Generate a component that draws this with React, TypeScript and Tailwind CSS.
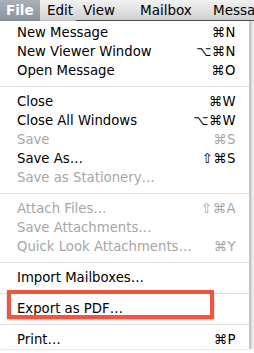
import React from "react";

type Item = { label: string; keys?: string; disabled?: boolean; boxed?: boolean } | "sep";

const items: Item[] = [
  { label: "New Message", keys: "⌘N" },
  { label: "New Viewer Window", keys: "⌥⌘N" },
  { label: "Open Message", keys: "⌘O" },
  "sep",
  { label: "Close", keys: "⌘W" },
  { label: "Close All Windows", keys: "⌥⌘W" },
  { label: "Save", keys: "⌘S", disabled: true },
  { label: "Save As…", keys: "⇧⌘S" },
  { label: "Save as Stationery…", disabled: true },
  "sep",
  { label: "Attach Files…", keys: "⇧⌘A", disabled: true },
  { label: "Save Attachments…", disabled: true },
  { label: "Quick Look Attachments…", keys: "⌘Y", disabled: true },
  "sep",
  { label: "Import Mailboxes…" },
  "sep",
  { label: "Export as PDF…", boxed: true },
  "sep",
  { label: "Print…", keys: "⌘P" },
];

const App = () => {
  return (
    <div className="w-[254px] h-[353px] overflow-hidden bg-white font-['DejaVu_Sans',sans-serif] text-black">
      <div className="flex h-[21px] items-center bg-gradient-to-b from-[#f2f2f2] to-[#cfcfcf] text-[13.5px] whitespace-nowrap">
        <div className="h-full w-[40px] shrink-0 flex items-center pl-[6px] font-bold text-white bg-gradient-to-b from-[#a9b0ba] to-[#8a929e]">
          File
        </div>
        <div className="h-full w-[36px] shrink-0 flex items-center pl-[7px]">Edit</div>
        <div className="h-full w-[57px] shrink-0 flex items-center pl-[7px] border-b border-[#555]">View</div>
        <div className="h-full w-[73px] shrink-0 flex items-center pl-[7px] border-b border-[#555]">Mailbox</div>
        <div className="h-full flex-1 flex items-center pl-[7px] border-b border-[#555] overflow-hidden">Messa</div>
      </div>
      <div className="flex">
        <div className="relative w-[250px] pt-[2px] border-r border-[#c4c4c4] shadow-[1px_0_2px_rgba(0,0,0,0.25)] text-[13.25px]">
          {items.map((it, i) =>
            it === "sep" ? (
              <div key={i} className="h-[12px] flex items-center">
                <div className="w-full h-px bg-[#dedede]" />
              </div>
            ) : (
              <div
                key={i}
                className={`relative h-[19px] flex items-center justify-between pl-[17px] pr-[13px] ${
                  it.disabled ? "text-[#a6a6a6]" : "text-black"
                }`}
              >
                <span>{it.label}</span>
                {it.keys && <span className="tracking-[0.5px]">{it.keys}</span>}
                {it.boxed && (
                  <div className="absolute left-[7px] top-[-9px] w-[207px] h-[29px] border-[4px] border-[#f0553f] shadow-[0_1px_2px_rgba(0,0,0,0.3)]" />
                )}
              </div>
            )
          )}
        </div>
        <div className="flex-1 bg-[#ececec]" />
      </div>
    </div>
  );
};

export default App;
